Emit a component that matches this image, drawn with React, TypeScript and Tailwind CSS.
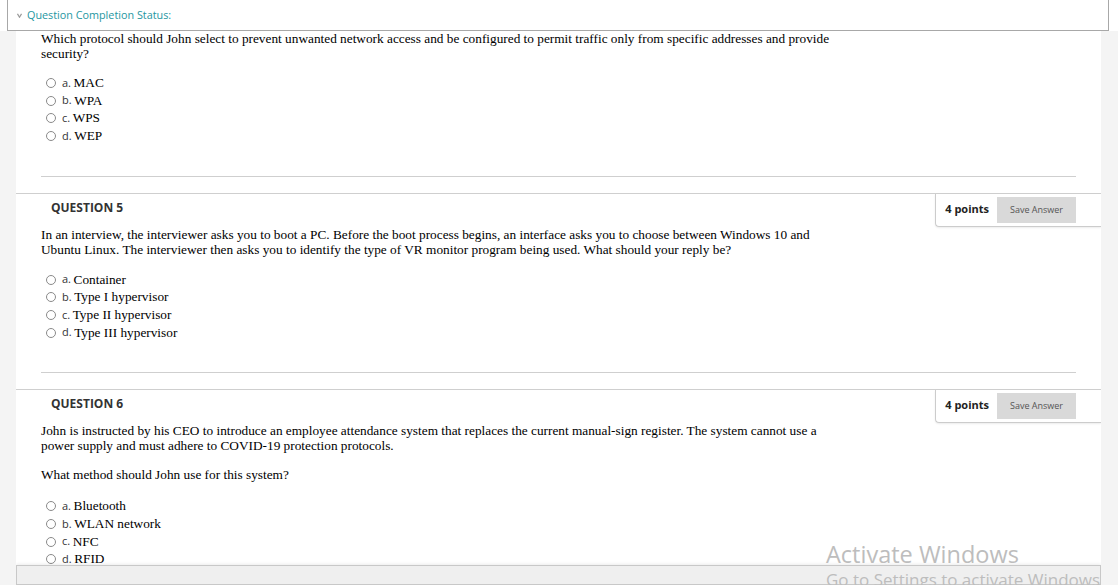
import React from "react";

const serif = { fontFamily: '"Liberation Serif", "Times New Roman", serif' };
const sans = { fontFamily: '"Open Sans", "Noto Sans", sans-serif' };

type Opt = { k: string; t: string };

function Options({ opts }: { opts: Opt[] }) {
  return (
    <div className="flex flex-col pl-[5px]">
      {opts.map((o) => (
        <div key={o.k} className="flex h-[17.7px] items-center">
          <span className="mr-[6px] inline-block h-[10px] w-[10px] rounded-full border border-[#8a8a8a] bg-white" />
          <span style={sans} className="text-[11px] text-[#333]">
            {o.k}
          </span>
          <span style={serif} className="ml-[2.5px] text-[13.3px] text-black">
            {o.t}
          </span>
        </div>
      ))}
    </div>
  );
}

function Para({ children, mb = "mb-[14px]" }: { children: React.ReactNode; mb?: string }) {
  return (
    <p style={serif} className={`${mb} whitespace-nowrap text-[13.3px] leading-[15px] text-black`}>
      {children}
    </p>
  );
}

function Separator() {
  return (
    <>
      <div className="mx-[25px] mt-[30px] border-t border-[#cfcfcf]" />
      <div className="h-[16px]" />
    </>
  );
}

function QuestionHeader({ n }: { n: number }) {
  return (
    <div className="flex h-[33px] items-stretch justify-between">
      <div style={sans} className="flex items-center pb-[5px] pl-[35px] text-[12px] font-bold text-[#333]">
        QUESTION {n}
      </div>
      <div className="flex items-center gap-[8px] rounded-bl-[4px] border-b border-l border-[#cccccc] pl-[9px] pr-[25px] shadow-[0_1px_2px_rgba(0,0,0,0.08)]">
        <span style={sans} className="pb-[1px] text-[11px] font-bold text-[#222]">
          4 points
        </span>
        <button
          style={sans}
          className="h-[26px] w-[79px] bg-[#d9d9d9] text-[9px] text-[#555]"
        >
          Save Answer
        </button>
      </div>
    </div>
  );
}

export default function App() {
  return (
    <div className="relative flex h-[585px] w-[1119px] flex-col overflow-hidden bg-white">
      {/* header band */}
      <div className="h-[31px] shrink-0 bg-white">
        <div className="ml-[7px] flex h-[31px] w-[1102px] items-center border-x border-b border-[#a8a8a8] bg-white pl-[9px]">
          <svg width="5" height="5" viewBox="0 0 5 5" className="mr-[5px] mt-[1px]">
            <path d="M0.5 0.8 L2.5 4.2 L4.5 0.8" fill="none" stroke="#9a9a9a" strokeWidth="1.2" />
          </svg>
          <span style={sans} className="text-[10.8px] text-[#2596a1]">
            Question Completion Status:
          </span>
        </div>
      </div>

      <div className="flex min-h-0 flex-1">
        <div className="w-[16px] shrink-0 bg-[#f4f4f4]" />
        <div className="relative w-[1085px] shrink-0 overflow-hidden bg-white">
          {/* Q4 tail */}
          <div className="pl-[25px]">
            <Para mb="mb-[13px]">
              Which protocol should John select to prevent unwanted network access and be configured to
              permit traffic only from specific addresses and provide
              <br />
              security?
            </Para>
            <Options
              opts={[
                { k: "a.", t: "MAC" },
                { k: "b.", t: "WPA" },
                { k: "c.", t: "WPS" },
                { k: "d.", t: "WEP" },
              ]}
            />
          </div>
          <div className="mx-[25px] mt-[31px] border-t border-[#cfcfcf]" />
          <div className="h-[16px]" />

          {/* Q5 */}
          <div className="border-t border-[#cfcfcf]">
            <QuestionHeader n={5} />
            <div className="pl-[25px]">
              <Para>
                In an interview, the interviewer asks you to boot a PC. Before the boot process begins, an
                interface asks you to choose between Windows 10 and
                <br />
                Ubuntu Linux. The interviewer then asks you to identify the type of VR monitor program being
                used. What should your reply be?
              </Para>
              <Options
                opts={[
                  { k: "a.", t: "Container" },
                  { k: "b.", t: "Type I hypervisor" },
                  { k: "c.", t: "Type II hypervisor" },
                  { k: "d.", t: "Type III hypervisor" },
                ]}
              />
            </div>
            <Separator />
          </div>

          {/* Q6 */}
          <div className="border-t border-[#cfcfcf]">
            <QuestionHeader n={6} />
            <div className="pl-[25px]">
              <Para>
                John is instructed by his CEO to introduce an employee attendance system that replaces the
                current manual-sign register. The system cannot use a
                <br />
                power supply and must adhere to COVID-19 protection protocols.
              </Para>
              <Para mb="mb-[16px]">What method should John use for this system?</Para>
              <Options
                opts={[
                  { k: "a.", t: "Bluetooth" },
                  { k: "b.", t: "WLAN network" },
                  { k: "c.", t: "NFC" },
                  { k: "d.", t: "RFID" },
                ]}
              />
            </div>
          </div>

          {/* bottom fixed bar */}
          <div className="absolute bottom-0 left-0 right-0 h-[20px] border border-[#c8c8c8] bg-[#efefef] shadow-[0_-1px_3px_rgba(0,0,0,0.08)]" />

          {/* watermark */}
          <div
            style={{ fontFamily: '"Open Sans", "Noto Sans", sans-serif' }}
            className="pointer-events-none absolute left-[810px] top-[508px] whitespace-nowrap text-[#bdbdbd]"
          >
            <div className="text-[23.5px] leading-[30px]">Activate Windows</div>
            <div className="text-[17px] leading-[22px]">Go to Settings to activate Windows.</div>
          </div>
        </div>
        <div className="w-[17px] shrink-0 bg-[#f4f4f4]" />
        <div className="w-[1px] shrink-0 bg-white" />
      </div>
    </div>
  );
}
